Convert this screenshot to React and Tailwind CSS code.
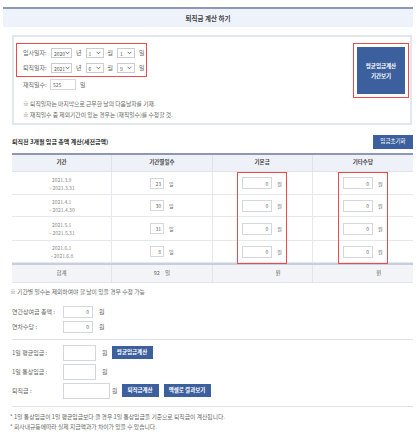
const Chevron = () => (
  <svg width="5" height="4" viewBox="0 0 10 7" className="shrink-0">
    <path d="M1 1 L5 5 L9 1" fill="none" stroke="#555" strokeWidth="1.6" />
  </svg>
);

function Select({ value, w }) {
  return (
    <div className={`${w} h-[10px] border border-[#c9ccd4] bg-white flex items-center justify-between pl-[2px] pr-[2px] text-[5px] text-[#555]`}>
      <span>{value}</span>
      <Chevron />
    </div>
  );
}

function Box({ value = "", w, h = "h-[12px]" }) {
  return (
    <div className={`${w} ${h} border border-[#d4d7de] bg-white flex items-center justify-end pr-[3px] text-[5px] text-[#666]`}>
      {value}
    </div>
  );
}

function BlueBtn({ children, w }) {
  return (
    <div className={`${w} h-[13px] bg-[#3c5f9e] text-white text-[5.5px] font-bold flex items-center justify-center`}>
      {children}
    </div>
  );
}

const rows = [
  { from: "2021.3.9", to: "~ 2021.3.31", days: "23", h: "h-[23px]" },
  { from: "2021.4.1", to: "~ 2021.4.30", days: "30", h: "h-[22px]" },
  { from: "2021.5.1", to: "~ 2021.5.31", days: "31", h: "h-[24px]" },
  { from: "2021.6.1", to: "~ 2021.6.8", days: "8", h: "h-[22px]" },
];

export default function App() {
  return (
    <div className="w-[420px] h-[443px] bg-white overflow-hidden text-[6px] leading-none text-[#666] font-['Noto_Sans_CJK_KR',sans-serif]">
      {/* title bar */}
      <div className="ml-[3px] w-[410px] mt-[7px] h-[20px] border-t-2 border-[#8e98b6] bg-[#eef2fa] flex items-center justify-center text-[6.5px] font-bold text-[#444]">
        퇴직금 계산 하기
      </div>

      {/* date box */}
      <div className="ml-[12px] w-[400px] mt-[8px] h-[90px] border-2 border-[#e3e7f2] flex justify-between">
        <div className="pl-[2px] pt-[6px]">
          <div className="w-[131px] h-[34px] border border-[#ee4a4a] pl-[6px] pt-[4px] flex flex-col gap-[5px]">
            <div className="flex items-center">
              <span className="w-[28px]">입사일자:</span>
              <Select value="2020" w="w-[21px]" />
              <span className="mx-[4px]">년</span>
              <Select value="1" w="w-[18px]" />
              <span className="mx-[4px]">월</span>
              <Select value="1" w="w-[18px]" />
              <span className="ml-[4px]">일</span>
            </div>
            <div className="flex items-center">
              <span className="w-[28px]">퇴직일자:</span>
              <Select value="2021" w="w-[21px]" />
              <span className="mx-[4px]">년</span>
              <Select value="6" w="w-[18px]" />
              <span className="mx-[4px]">월</span>
              <Select value="9" w="w-[18px]" />
              <span className="ml-[4px]">일</span>
            </div>
          </div>
          <div className="flex items-center mt-[2px] ml-[7px]">
            <span className="w-[27px]">재직일수:</span>
            <div className="w-[26px] h-[11px] border border-[#d4d7de] flex items-center pl-[2px] text-[5px]">525</div>
            <span className="ml-[4px]">일</span>
          </div>
          <div className="ml-[7px] mt-[11px] flex flex-col gap-[5px] text-[5.8px]">
            <p>※ 퇴직일자는 마지막으로 근무한 날의 다음날자를 기재.</p>
            <p>※ 재직일수 중 제외기간이 있는 경우는 (재직일수)를 수정할 것.</p>
          </div>
        </div>
        <div className="pt-[6px] pr-[1px]">
          <div className="w-[56px] h-[55px] border border-[#ee4a4a] p-[3px]">
            <div className="w-full h-full bg-[#3c5f9e] text-white font-bold text-[5.5px] leading-[10px] flex flex-col items-center justify-center">
              <span>평균임금계산</span>
              <span>기간보기</span>
            </div>
          </div>
        </div>
      </div>

      {/* section title */}
      <div className="ml-[12px] w-[401px] mt-[10px] flex items-center justify-between">
        <span className="text-[6px] font-bold text-[#333]">퇴직전 3개월 임금 총액 계산(세전금액)</span>
        <div className="w-[40px] h-[14px] bg-[#3c5f9e] text-white text-[5.5px] flex items-center justify-center">임금초기화</div>
      </div>

      {/* table */}
      <div className="relative ml-[12px] w-[401px] mt-[4px] border-t-2 border-[#8e98b6]">
        <div className="grid grid-cols-4 h-[17px] bg-[#eef1f8] border-b border-[#e0e3ea] font-bold text-[#444] text-[5.5px]">
          <div className="flex items-center justify-center border-r border-[#dde1ea]">기간</div>
          <div className="flex items-center justify-center border-r border-[#dde1ea]">기간별일수</div>
          <div className="flex items-center justify-center border-r border-[#dde1ea]">기본금</div>
          <div className="flex items-center justify-center">기타수당</div>
        </div>
        {rows.map((r) => (
          <div key={r.from} className={`grid grid-cols-4 ${r.h} border-b border-[#e6e8ee] text-[5px]`}>
            <div className="flex flex-col items-center justify-center gap-[3px] border-r border-[#e6e8ee] text-[#888]">
              <span>{r.from}</span>
              <span>{r.to}</span>
            </div>
            <div className="flex items-center justify-center gap-[5px] border-r border-[#e6e8ee]">
              <div className="w-[14px] h-[11px] border border-[#d4d7de] flex items-center justify-end pr-[2px] text-[#666]">{r.days}</div>
              <span>일</span>
            </div>
            <div className="flex items-center justify-center gap-[5px] border-r border-[#e6e8ee]">
              <Box value="0" w="w-[30px]" />
              <span>원</span>
            </div>
            <div className="flex items-center justify-center gap-[5px]">
              <Box value="0" w="w-[30px]" />
              <span>원</span>
            </div>
          </div>
        ))}
        <div className="grid grid-cols-4 h-[20px] bg-[#f3f4f7] border-t-2 border-[#c8cee0] border-b border-b-[#e3e5ea] text-[5.5px]">
          <div className="flex items-center justify-center border-r border-[#e3e5ea]">합계</div>
          <div className="flex items-center justify-center gap-[5px] border-r border-[#e3e5ea]">
            <span>92</span>
            <span>일</span>
          </div>
          <div className="flex items-center justify-center pl-[32px] border-r border-[#e3e5ea]">원</div>
          <div className="flex items-center justify-center pl-[32px]">원</div>
        </div>
        <div className="absolute left-[225px] top-[17px] w-[50px] h-[92px] border border-[#ee4a4a]" />
        <div className="absolute left-[326px] top-[17px] w-[50px] h-[92px] border border-[#ee4a4a]" />
      </div>

      {/* note */}
      <p className="ml-[10px] mt-[6px] text-[5.8px]">※ 기간별 일수는 제외하여야 할 날이 있을 경우 수정 가능</p>

      {/* bonus rows */}
      <div className="ml-[12px] mt-[11px] flex flex-col gap-[3px]">
        <div className="flex items-center">
          <span className="w-[51px]">연간상여금 총액 :</span>
          <Box value="0" w="w-[30px]" />
          <span className="ml-[6px]">원</span>
        </div>
        <div className="flex items-center">
          <span className="w-[51px]">연차수당 :</span>
          <Box value="0" w="w-[30px]" />
          <span className="ml-[6px]">원</span>
        </div>
      </div>

      <div className="ml-[12px] w-[401px] mt-[6px] border-t border-[#e2e2e2]" />

      {/* result rows */}
      <div className="ml-[12px] mt-[5px] flex flex-col gap-[3px]">
        <div className="flex items-center">
          <span className="w-[51px]">1일 평균임금 :</span>
          <Box w="w-[33px]" h="h-[16px]" />
          <span className="ml-[6px]">원</span>
          <div className="ml-[4px]"><BlueBtn w="w-[41px]">평균임금계산</BlueBtn></div>
        </div>
        <div className="flex items-center">
          <span className="w-[51px]">1일 통상임금 :</span>
          <Box w="w-[33px]" h="h-[16px]" />
          <span className="ml-[6px]">원</span>
        </div>
        <div className="flex items-center">
          <span className="w-[51px]">퇴직금 :</span>
          <Box w="w-[47px]" h="h-[16px]" />
          <span className="ml-[2px]">원</span>
          <div className="ml-[4px]"><BlueBtn w="w-[37px]">퇴직금계산</BlueBtn></div>
          <div className="ml-[5px]"><BlueBtn w="w-[47px]">엑셀로 결과보기</BlueBtn></div>
        </div>
      </div>

      <div className="ml-[12px] w-[401px] mt-[7px] border-t border-[#e2e2e2]" />

      <div className="ml-[10px] mt-[7px] flex flex-col gap-[4.5px] text-[5.8px]">
        <p>* 1일 통상임금이 1일 평균임금보다 클 경우 1일 통상임금을 기준으로 퇴직금이 계산됩니다.</p>
        <p>* 회사내규등에따라 실제 지급액과가 차이가 있을 수 있습니다.</p>
      </div>
    </div>
  );
}
